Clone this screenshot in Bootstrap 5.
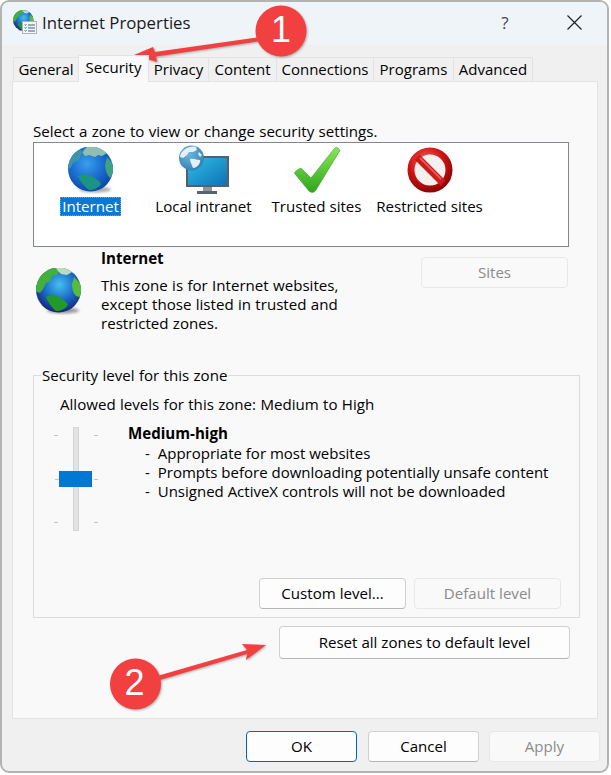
<!DOCTYPE html>
<html lang="en">
<head>
  <meta charset="UTF-8">
  <meta name="viewport" content="width=device-width, initial-scale=1">
  <title>Internet Properties</title>
  <link href="https://cdn.jsdelivr.net/npm/bootstrap@5.3.2/dist/css/bootstrap.min.css" rel="stylesheet">
  <style>
    html, body { height: 775px; overflow: hidden; }
    body {
      background: #fff;
      color: #000;
      font-family: "Open Sans", "Noto Sans", sans-serif;
      font-size: 15.1px;
      word-spacing: .4px;
      line-height: 19px;
      position: relative;
    }
    .win {
      width: 609px;
      height: 773px;
      background: #f0f0f0;
      border: 2px solid #b3b3b3;
      border-radius: 9px;
      overflow: hidden;
    }
    .win-title {
      height: 43px;
      background: #eff4f9;
      padding: 0 0 3px 11px;
    }
    .win-title-text { font-size: 16.8px; word-spacing: 0; margin-left: 5px; color: #1a1a1a; }
    .win-help { margin-left: auto; width: 24px; text-align: center; font-size: 17px; color: #444; }
    .win-close { margin: 0 25px 0 50px; }
    .tab-strip { height: 36px; padding: 12px 0 0 11px; border: 0; flex-wrap: nowrap; }
    .tab-strip .nav-link {
      height: 24px;
      margin: 0 -1px -1px 0;
      padding: 2px 0 0;
      font-size: 15px;
      word-spacing: 0;
      text-align: center;
      color: #000;
      background: #f0f0f0;
      border: 1px solid #e3e3e3;
      border-bottom: 0;
      border-radius: 0;
    }
    .tab-strip .nav-link.active {
      height: 27px;
      margin-top: -2px;
      padding-top: 2px;
      background: #f9f9f9;
      color: #000;
      position: relative;
      z-index: 1;
    }
    .tab-general { width: 66px; }
    .tab-security { width: 71px; }
    .tab-privacy { width: 61px; }
    .tab-content-t { width: 69px; }
    .tab-connections { width: 98px; }
    .tab-programs { width: 81px; }
    .tab-advanced { width: 80px; }
    .tab-page {
      width: 586px;
      height: 638px;
      margin-left: 10px;
      padding: 40px 20px 0;
      background: #f9f9f9;
      border: 1px solid #e3e3e3;
    }
    .zone-box {
      width: 536px;
      height: 105px;
      margin-top: 1px;
      padding: 4px 0 0 0;
      background: #fff;
      border: 1px solid #82868e;
    }
    .zone-item { width: 113px; text-align: center; word-spacing: 0; }
    .zone-item svg { display: block; margin: 0 auto 3px; overflow: visible; }
    .zone-pick {
      display: inline-block;
      padding: 0 2px;
      background: #0a78d7;
      color: #fff;
      outline: 1px dotted #e8872a;
      outline-offset: -1px;
    }
    .zone-info { height: 119px; padding-top: 2px; }
    .zone-info-icon { width: 68px; padding: 19px 0 0 3px; }
    .zone-info-name { font-weight: 700; }
    .zone-info-desc { margin-top: 8px; }
    .btn-win {
      height: 31px;
      padding: 0;
      font-size: 15.1px;
      line-height: 29px;
      color: #000;
      background: #fdfdfd;
      border: 1px solid #d0d0d0;
      border-bottom-color: #b5b5b5;
      border-radius: 4px;
    }
    .btn-win.disabled, .btn-win:disabled {
      color: #8b8b8b;
      background: #f9f9f9;
      border-color: #e8e8e8;
      opacity: 1;
    }
    .btn-sites { width: 147px; margin: 8px 9px 0 auto; }
    .level-group {
      width: 547px;
      height: 252px;
      margin: 0;
      padding: 0;
      border: 1px solid #dcdcdc;
      border-radius: 0;
    }
    .level-group legend {
      float: none;
      width: auto;
      margin: 0 0 0 7px;
      padding: 0 1px;
      font-size: 15.1px;
      line-height: 19px;
    }
    .level-allowed { margin: 10px 0 0 26px; }
    .level-row { margin: 10px 0 0 16px; height: 154px; }
    .level-text { margin-left: 28px; }
    .level-name { font-weight: 700; margin-bottom: 1px; }
    .level-points { padding-left: 17px; font-size: 15px; word-spacing: 0; }
    .level-dash { margin-right: 4px; }
    .level-btns { gap: 8px; padding-left: 225px; }
    .btn-level { width: 147px; }
    .btn-reset { width: 291px; height: 33px; margin: 8px 0 0 246px; display: block; }
    .win-foot { padding: 12px 7px 0 0; gap: 10px; }
    .btn-foot { width: 111px; }
    .btn-ok { border-color: #0067c0; margin-right: 1px; }
    .callouts { position: absolute; left: 0; top: 0; pointer-events: none; }
    .callouts g { filter: drop-shadow(1px 1px 1px rgba(0,0,0,.3)); }
    .callouts text { font-family: "Liberation Sans", sans-serif; font-size: 36px; fill: #fff; text-anchor: middle; }
  </style>
</head>
<body>

<svg width="0" height="0" class="d-block">
  <defs>
    <radialGradient id="seaA" cx="42%" cy="38%" r="62%">
      <stop offset="0" stop-color="#3b9fe8"/><stop offset=".55" stop-color="#1a6fd2"/><stop offset="1" stop-color="#0e4aa8"/>
    </radialGradient>
    <radialGradient id="seaB" cx="52%" cy="38%" r="62%">
      <stop offset="0" stop-color="#45c0f0"/><stop offset=".55" stop-color="#1b6cc9"/><stop offset="1" stop-color="#15267a"/>
    </radialGradient>
    <radialGradient id="seaC" cx="40%" cy="35%" r="70%">
      <stop offset="0" stop-color="#6fb4dc"/><stop offset="1" stop-color="#2f7fb4"/>
    </radialGradient>
    <linearGradient id="tick" x1="0" y1="0" x2="0" y2="1">
      <stop offset="0" stop-color="#86e85a"/><stop offset="1" stop-color="#2fa51c"/>
    </linearGradient>
    <radialGradient id="stopRing" cx="40%" cy="30%" r="75%">
      <stop offset="0" stop-color="#f26a6a"/><stop offset=".6" stop-color="#d31212"/><stop offset="1" stop-color="#8f0606"/>
    </radialGradient>
    <linearGradient id="screen" x1="0" y1="0" x2="1" y2="1">
      <stop offset="0" stop-color="#2fc0e6"/><stop offset="1" stop-color="#0f6fb5"/>
    </linearGradient>
    <filter id="soft" x="-20%" y="-20%" width="140%" height="140%"><feGaussianBlur stdDeviation=".7"/></filter>
    <filter id="softer" x="-30%" y="-100%" width="160%" height="300%"><feGaussianBlur stdDeviation="1.500"/></filter>
    <clipPath id="ball"><circle cx="22.500" cy="22" r="22.500"/></clipPath>
    <symbol id="globe-soft" viewBox="0 0 46 47">
      <ellipse cx="27" cy="42.500" rx="16" ry="3" fill="#000" opacity=".35" filter="url(#softer)"/>
      <circle cx="22.500" cy="22" r="22.500" fill="url(#seaA)"/>
      <g clip-path="url(#ball)" filter="url(#soft)">
        <path d="M19 0h13l7 6-5 3-4-1-3 2-6-2-4 1-3-4z" fill="#8fbfb0"/>
        <path d="M9 3L1 11l-3 9 4 2 3-6 6-3 2-5 3-4z" fill="#3e93a8"/>
        <path d="M39 10l7 8-1 10-3 3c-3-3-5-8-5-13z" fill="#3f9f85"/>
        <path d="M10 29c5-3 11-2 15 1 3 2 7 4 8 7-3 4-7 6-12 6-4-3-9-9-11-14z" fill="#1f9482"/>
      </g>
    </symbol>
    <symbol id="globe-vivid" viewBox="0 0 46 47">
      <ellipse cx="27" cy="42.500" rx="16" ry="3" fill="#000" opacity=".4" filter="url(#softer)"/>
      <circle cx="22.500" cy="22" r="22.500" fill="url(#seaB)"/>
      <g clip-path="url(#ball)" filter="url(#soft)">
        <path d="M4 5l8-5h8l3 3-2 4-5 1-2 5-4 2-3 6-3 4-5-2V12z" fill="#42b03a"/>
        <path d="M20 0h11l5 4-5 3-6-1-3-3z" fill="#b9dcc0"/>
        <path d="M38 9l8 8v9l-3 3-3-1c-3-3-4-7-4-12z" fill="#55bd3a"/>
        <path d="M10 29c5-3 11-2 15 1 3 2 6 4 7 7-3 4-7 6-12 6-4-3-8-9-10-14z" fill="#219a2c"/>
      </g>
    </symbol>
  </defs>
</svg>

<div class="win">
  <div class="win-title d-flex align-items-center">
    <svg width="24" height="24" viewBox="0 0 24 24" class="flex-shrink-0">
      <use href="#globe-vivid" width="21" height="22"/>
      <rect x="9.500" y="11.500" width="14" height="12" fill="#f4f6f9" stroke="#a9b4c0"/>
      <path d="M11.500 14.500l1 1 1-1.500M11.500 17.500l1 1 1-1.500M11.500 20.500l1 1 1-1.500" stroke="#2f8fd0" fill="none"/>
      <path d="M15 15h7M15 18h7M15 21h7" stroke="#45607e"/>
    </svg>
    <span class="win-title-text">Internet Properties</span>
    <span class="win-help">?</span>
    <svg class="win-close" width="15" height="15" viewBox="0 0 15 15">
      <path d="M.5.5l14 14M14.500.5l-14 14" stroke="#222" stroke-width="1.200" fill="none"/>
    </svg>
  </div>

  <ul class="nav nav-tabs tab-strip">
    <li class="nav-item"><a class="nav-link tab-general" href="#">General</a></li>
    <li class="nav-item"><a class="nav-link active tab-security" href="#">Security</a></li>
    <li class="nav-item"><a class="nav-link tab-privacy" href="#">Privacy</a></li>
    <li class="nav-item"><a class="nav-link tab-content-t" href="#">Content</a></li>
    <li class="nav-item"><a class="nav-link tab-connections" href="#">Connections</a></li>
    <li class="nav-item"><a class="nav-link tab-programs" href="#">Programs</a></li>
    <li class="nav-item"><a class="nav-link tab-advanced" href="#">Advanced</a></li>
  </ul>

  <div class="tab-page">
    <div>Select a zone to view or change security settings.</div>

    <div class="zone-box d-flex">
      <div class="zone-item">
        <svg width="46" height="47"><use href="#globe-soft"/></svg>
        <span class="zone-pick">Internet</span>
      </div>
      <div class="zone-item">
        <svg width="50" height="47" viewBox="0 1 50 47">
          <rect x="8" y="11" width="41" height="29" fill="url(#screen)" stroke="#55606a" stroke-width="2"/>
          <rect x="24" y="41" width="9" height="4" fill="#8a979e"/>
          <rect x="18" y="45" width="20" height="3" fill="#59636b"/>
          <circle cx="12.500" cy="12" r="12.500" fill="url(#seaC)"/>
          <path d="M6 3c3-2 7-3 11-2l1 3-4 2-4 0-2 3-4 3-3-1c0-3 2-6 5-8zM11 13c4-1 7 1 10 1 1 3-3 8-7 8-1-3-3-6-3-9zM20 6l3 3-2 2-2-3z" fill="#e6eff5" filter="url(#soft)"/>
        </svg>
        Local intranet
      </div>
      <div class="zone-item">
        <svg width="46" height="47" viewBox="0 0 46 47">
          <path d="M1 27c-1-1 0-2 1-3l3-2c1-1 2-1 3 0l9 9L40 2c1-1 2-2 4-1l1 1c1 1 1 2 0 3L22 43c-2 3-5 3-7 1z" fill="url(#tick)" stroke="#3e9a28" stroke-width=".6"/>
        </svg>
        Trusted sites
      </div>
      <div class="zone-item">
        <svg width="46" height="47" viewBox="0 0 46 47">
          <circle cx="23" cy="23" r="19" fill="#f4f0f0" stroke="url(#stopRing)" stroke-width="7"/>
          <path d="M10 10l26 26" stroke="#cf1a1a" stroke-width="7"/>
          <path d="M13 11l21 21" stroke="#e25a5a" stroke-width="2"/>
        </svg>
        Restricted sites
      </div>
    </div>

    <div class="zone-info d-flex">
      <div class="zone-info-icon"><svg width="46" height="47" class="d-block"><use href="#globe-vivid"/></svg></div>
      <div>
        <div class="zone-info-name">Internet</div>
        <div class="zone-info-desc">This zone is for Internet websites,<br>except those listed in trusted and<br>restricted zones.</div>
      </div>
      <button class="btn btn-win btn-sites" disabled>Sites</button>
    </div>

    <fieldset class="level-group">
      <legend>Security level for this zone</legend>
      <div class="level-allowed">Allowed levels for this zone: Medium to High</div>
      <div class="level-row d-flex">
        <svg width="50" height="110" viewBox="0 0 50 110" class="flex-shrink-0">
          <rect x="23.500" y="3.500" width="5" height="103" fill="#e2e3e5" stroke="#d3d4d6"/>
          <path d="M4 11.500h4M44 11.500h4M5 55.500h4M44 55.500h4M4 98.500h4M44 98.500h4" stroke="#c4c4c4"/>
          <rect x="9" y="47" width="33" height="16" fill="#0078d4"/>
        </svg>
        <div class="level-text">
          <div class="level-name">Medium-high</div>
          <div class="level-points">
            <div><span class="level-dash">-</span> Appropriate for most websites</div>
            <div><span class="level-dash">-</span> Prompts before downloading potentially unsafe content</div>
            <div><span class="level-dash">-</span> Unsigned ActiveX controls will not be downloaded</div>
          </div>
        </div>
      </div>
      <div class="level-btns d-flex">
        <button class="btn btn-win btn-level">Custom level...</button>
        <button class="btn btn-win btn-level" disabled>Default level</button>
      </div>
    </fieldset>

    <button class="btn btn-win btn-reset">Reset all zones to default level</button>
  </div>

  <div class="win-foot d-flex justify-content-end">
    <button class="btn btn-win btn-foot btn-ok">OK</button>
    <button class="btn btn-win btn-foot">Cancel</button>
    <button class="btn btn-win btn-foot" disabled>Apply</button>
  </div>
</div>

<svg class="callouts" width="611" height="775" viewBox="0 0 611 775">
  <g>
    <path d="M257 37.500L155 52 153 47 134 55 157 62 156 56.500 258 41.500z" fill="#f23f3f"/>
    <circle cx="281" cy="31" r="25.500" fill="#f23f3f"/>
  </g>
  <text x="281" y="42">1</text>
  <g>
    <path d="M159 675.500L247 650 242 644 266 645 246 660 247 654 160 680z" fill="#f23f3f"/>
    <circle cx="135.500" cy="684" r="25.500" fill="#f23f3f"/>
  </g>
  <text x="134.500" y="695">2</text>
</svg>

</body>
</html>
